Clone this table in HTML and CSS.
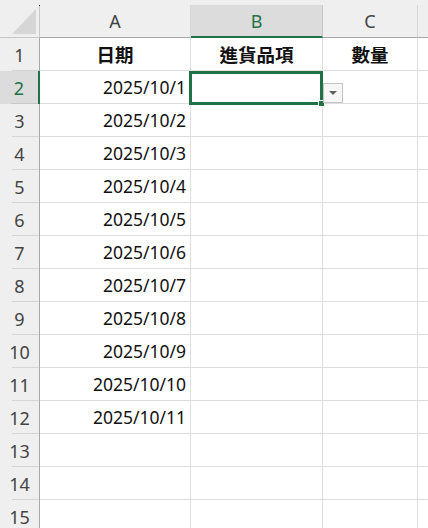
FILE: index.html
```html
<!DOCTYPE html>
<html lang="zh-Hant">
<head>
<meta charset="utf-8">
<link rel="stylesheet" href="styles.css">
</head>
<body>
<div class="sheet">
  <div class="strip"></div>
  <div class="corner">
    <svg class="tri" width="40" height="33" viewBox="0 0 40 33"><polygon points="12,29 36,29 36,4" fill="#d6d6d6"/></svg>
    <span class="dot"></span>
  </div>
  <div class="colh">A</div>
  <div class="colh sel">B</div>
  <div class="colh">C</div>
  <div class="colh last"></div>

  <div class="rowh">1</div>
  <div class="cell head">日期</div>
  <div class="cell head">進貨品項</div>
  <div class="cell head">數量</div>
  <div class="cell last"></div>

  <div class="rowh sel">2</div><div class="cell num">2025/10/1</div><div class="cell"></div><div class="cell"></div><div class="cell last"></div>
  <div class="rowh">3</div><div class="cell num">2025/10/2</div><div class="cell"></div><div class="cell"></div><div class="cell last"></div>
  <div class="rowh">4</div><div class="cell num">2025/10/3</div><div class="cell"></div><div class="cell"></div><div class="cell last"></div>
  <div class="rowh">5</div><div class="cell num">2025/10/4</div><div class="cell"></div><div class="cell"></div><div class="cell last"></div>
  <div class="rowh">6</div><div class="cell num">2025/10/5</div><div class="cell"></div><div class="cell"></div><div class="cell last"></div>
  <div class="rowh">7</div><div class="cell num">2025/10/6</div><div class="cell"></div><div class="cell"></div><div class="cell last"></div>
  <div class="rowh">8</div><div class="cell num">2025/10/7</div><div class="cell"></div><div class="cell"></div><div class="cell last"></div>
  <div class="rowh">9</div><div class="cell num">2025/10/8</div><div class="cell"></div><div class="cell"></div><div class="cell last"></div>
  <div class="rowh">10</div><div class="cell num">2025/10/9</div><div class="cell"></div><div class="cell"></div><div class="cell last"></div>
  <div class="rowh">11</div><div class="cell num">2025/10/10</div><div class="cell"></div><div class="cell"></div><div class="cell last"></div>
  <div class="rowh">12</div><div class="cell num">2025/10/11</div><div class="cell"></div><div class="cell"></div><div class="cell last"></div>
  <div class="rowh">13</div><div class="cell"></div><div class="cell"></div><div class="cell"></div><div class="cell last"></div>
  <div class="rowh">14</div><div class="cell"></div><div class="cell"></div><div class="cell"></div><div class="cell last"></div>
  <div class="rowh">15</div><div class="cell"></div><div class="cell"></div><div class="cell"></div><div class="cell last"></div>

  <div class="selection"></div>
  <div class="handle"></div>
  <div class="dropdown"><span class="arrow"></span></div>
</div>
</body>
</html>
```

FILE: styles.css
```css
html, body {
  margin: 0;
  padding: 0;
  background: #ffffff;
  overflow: hidden;
}

.sheet {
  position: relative;
  display: grid;
  grid-template-columns: 40px 151px 132px 95px 1fr;
  grid-template-rows: 5px 33px;
  grid-auto-rows: 33px;
  font-family: "Noto Sans", "Noto Sans CJK TC", sans-serif;
  color: #111;
}

.strip {
  grid-column: 1 / -1;
  background: #efefef;
}

.corner {
  position: relative;
  background: #efefef;
  border-right: 1px solid #c8c8c8;
  border-bottom: 1px solid #c8c8c8;
  box-sizing: border-box;
}

.tri {
  display: block;
}

.dot {
  position: absolute;
  left: 39px;
  top: 0;
  width: 1px;
  height: 1px;
  background: #222;
}

.colh {
  background: #efefef;
  box-sizing: border-box;
  border-bottom: 1px solid #a8a8a8;
  border-right: 1px solid #d6d6d6;
  display: flex;
  align-items: center;
  justify-content: center;
  font-size: 18px;
  color: #444;
}

.colh.sel {
  background: #dcdcdc;
  color: #217346;
  border-bottom: 2px solid #217346;
  border-right-color: #c6c6c6;
}

.colh.last {
  border-right: none;
}

.rowh {
  box-sizing: border-box;
  border-right: 1px solid #a8a8a8;
  background: linear-gradient(#d4d4d4, #d4d4d4) no-repeat right bottom / 27px 1px, #efefef;
  display: flex;
  align-items: center;
  justify-content: center;
  font-size: 18px;
  color: #444;
}

.rowh.sel {
  background: linear-gradient(#c8c8c8, #c8c8c8) no-repeat right bottom / 27px 1px, #dcdcdc;
  color: #217346;
  border-right: 2px solid #217346;
}

.cell {
  box-sizing: border-box;
  border-right: 1px solid #dedede;
  border-bottom: 1px solid #dedede;
  display: flex;
  align-items: center;
  font-size: 17.5px;
  white-space: nowrap;
}

.cell.last {
  border-right: none;
}

.cell.head {
  justify-content: center;
  font-weight: 700;
  font-size: 18.5px;
}

.cell.num {
  justify-content: flex-end;
  padding-right: 4px;
}

.selection {
  position: absolute;
  left: 189px;
  top: 71px;
  width: 134px;
  height: 34px;
  box-sizing: border-box;
  border: 3px solid #217346;
}

.handle {
  position: absolute;
  left: 319px;
  top: 101px;
  width: 5px;
  height: 5px;
  background: #217346;
  box-shadow: 0 0 0 1px #ffffff;
}

.dropdown {
  position: absolute;
  left: 323px;
  top: 83px;
  width: 20px;
  height: 20px;
  box-sizing: border-box;
  border: 1px solid #c4c4c4;
  background: #f6f6f6;
  display: flex;
  align-items: center;
  justify-content: center;
}

.arrow {
  width: 0;
  height: 0;
  border-left: 4px solid transparent;
  border-right: 4px solid transparent;
  border-top: 4px solid #606060;
}
```
